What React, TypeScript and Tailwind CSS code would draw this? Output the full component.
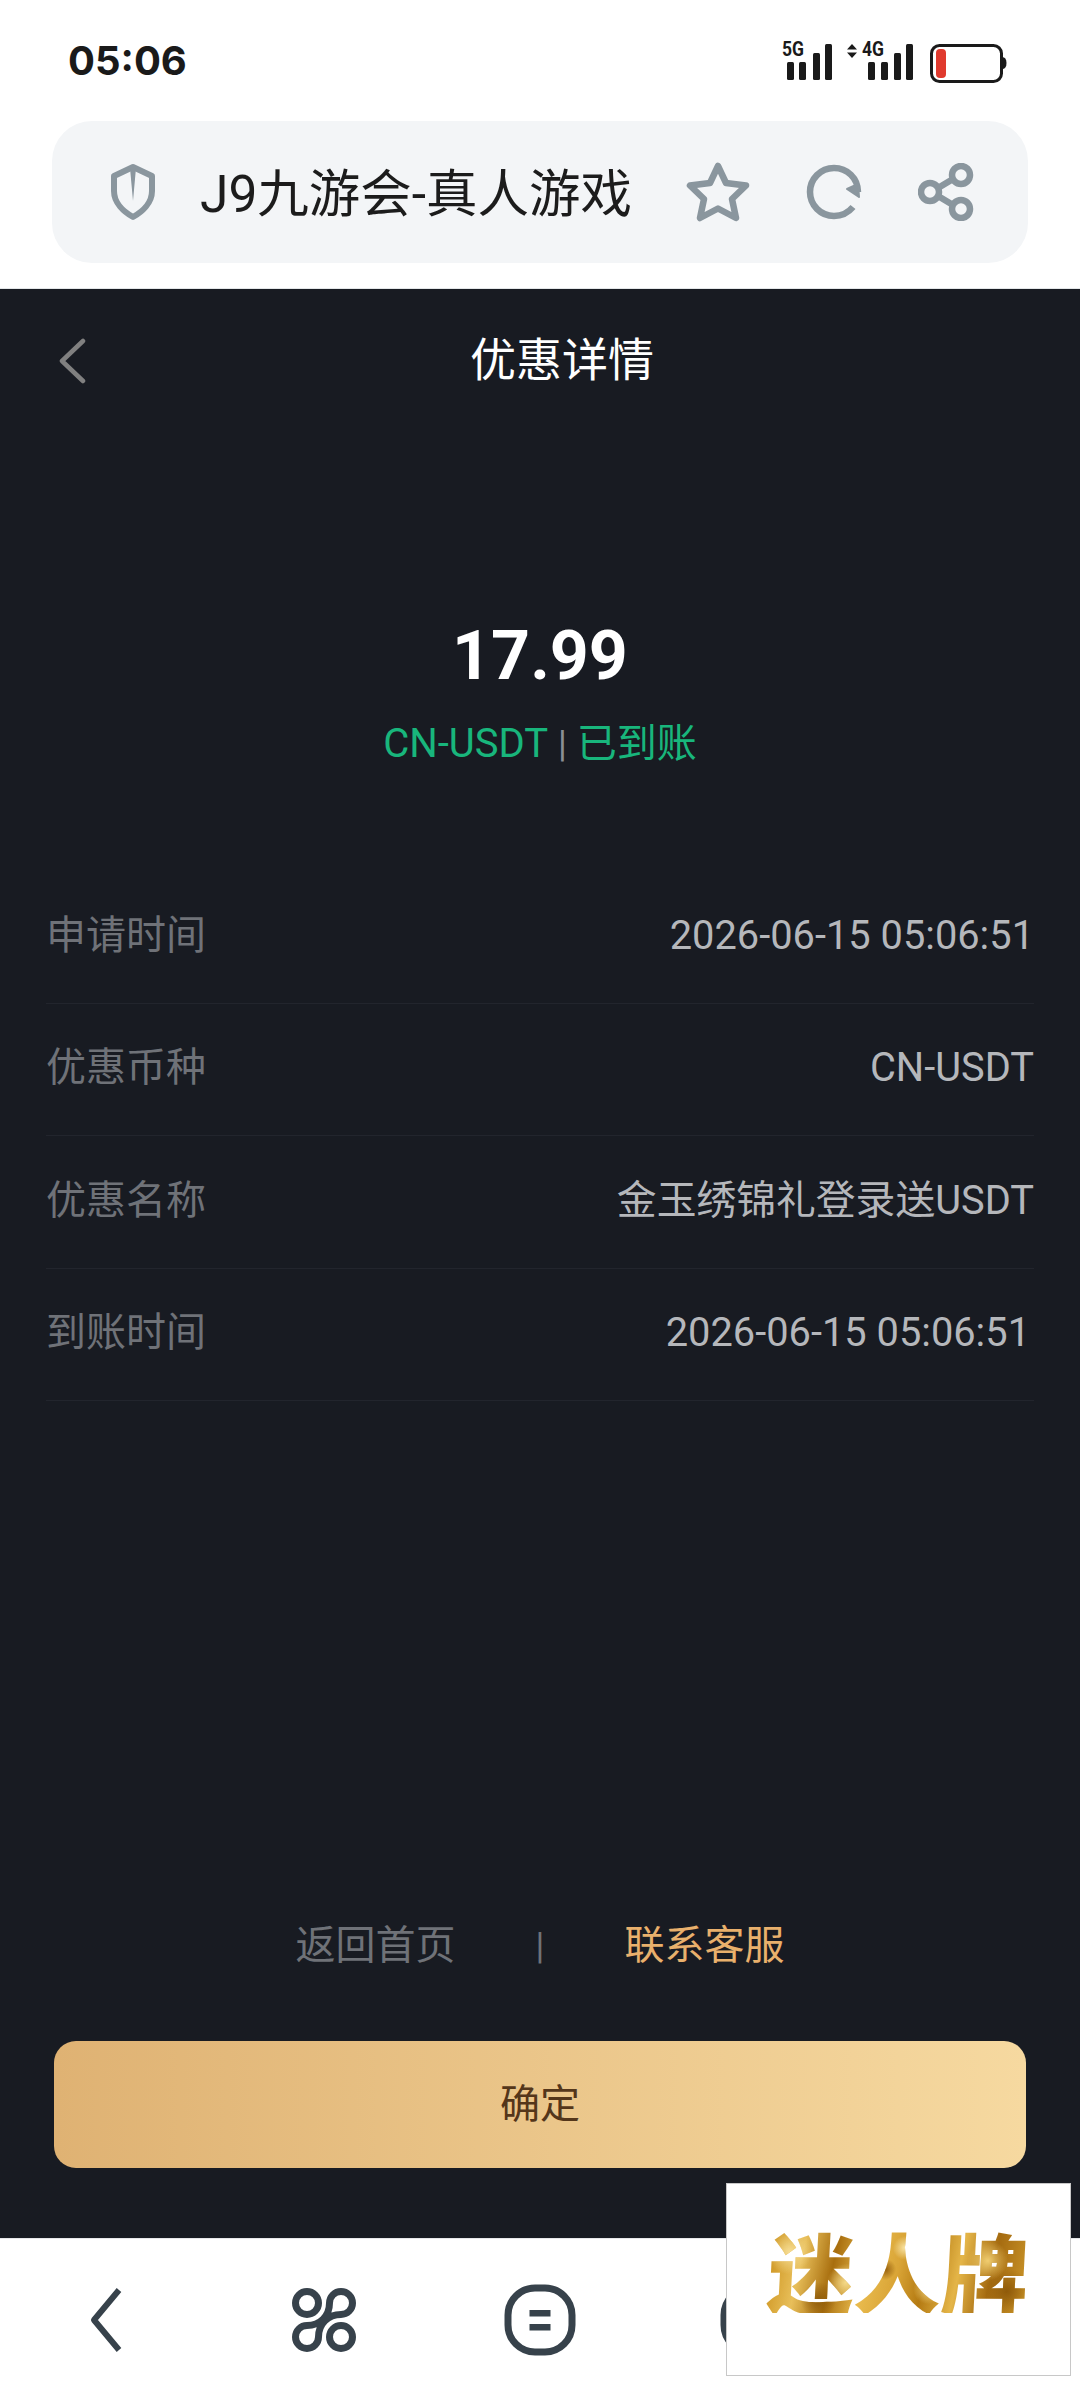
const rows = [
  { label: "申请时间", value: "2026-06-15 05:06:51", shift: "" },
  { label: "优惠币种", value: "CN-USDT", shift: "" },
  { label: "优惠名称", value: "金玉绣锦礼登录送USDT", shift: "" },
  { label: "到账时间", value: "2026-06-15 05:06:51", shift: "mr-[4px]" },
];

function StatusIcons() {
  return (
    <svg width="240" height="56" viewBox="0 -6 240 56">
      <text x="2" y="16" fontFamily="Roboto" fontWeight="700" fontSize="20" fill="#1a1a1a" textLength="22" lengthAdjust="spacingAndGlyphs">5G</text>
      <rect x="7" y="22" width="7" height="18" rx="1.500" fill="#1a1a1a" />
      <rect x="19" y="22" width="7" height="18" rx="1.500" fill="#1a1a1a" />
      <rect x="33" y="13" width="7" height="27" rx="1.500" fill="#1a1a1a" />
      <rect x="45" y="4" width="7" height="36" rx="1.500" fill="#1a1a1a" />
      <path d="M72 4l5 5.500h-10zM72 18l5-5.500h-10z" fill="#1a1a1a" />
      <text x="82" y="16" fontFamily="Roboto" fontWeight="700" fontSize="20" fill="#1a1a1a" textLength="22" lengthAdjust="spacingAndGlyphs">4G</text>
      <rect x="88" y="22" width="7" height="18" rx="1.500" fill="#1a1a1a" />
      <rect x="101" y="22" width="7" height="18" rx="1.500" fill="#1a1a1a" />
      <rect x="114" y="13" width="7" height="27" rx="1.500" fill="#1a1a1a" />
      <rect x="126" y="4" width="7" height="36" rx="1.500" fill="#1a1a1a" />
      <rect x="151.500" y="5.500" width="70" height="36" rx="8" fill="none" stroke="#1a1a1a" strokeWidth="3" />
      <rect x="156" y="9" width="10" height="29" rx="4" fill="#e03a2e" />
      <path d="M222 17c3 0 4.500 2 4.500 6s-1.500 6-4.500 6z" fill="#1a1a1a" />
    </svg>
  );
}

function ShieldIcon() {
  return (
    <svg width="46" height="58" viewBox="0 0 46 58" fill="none">
      <path d="M23 4L42 13V28C42 40 32 49 23 54C14 49 4 40 4 28V13Z" stroke="#8a969e" strokeWidth="6" strokeLinejoin="round" />
      <path d="M20 5H26L23 38Z" fill="#8a969e" />
    </svg>
  );
}

function StarIcon() {
  return (
    <svg width="64" height="60" viewBox="0 0 64 60" fill="none">
      <path d="M32 4L40 21L60 23.500L46 37L50 56L32 46.500L14 56L18 37L4 23.500L24 21Z" stroke="#8a969e" strokeWidth="6.500" strokeLinejoin="round" />
    </svg>
  );
}

function RefreshIcon() {
  return (
    <svg width="56" height="56" viewBox="0 0 56 56" fill="none">
      <path d="M47 43C42 49 36 52 28 52C14.500 52 4 41 4 28C4 15 14.500 4 28 4C41 4 52 14 52 28" stroke="#8a969e" strokeWidth="6.500" />
      <path d="M41 25L52 20L53 33Z" fill="#8a969e" stroke="#8a969e" strokeWidth="2" strokeLinejoin="round" />
    </svg>
  );
}

function ShareIcon() {
  return (
    <svg width="56" height="58" viewBox="0 0 56 58" fill="none" stroke="#8a969e" strokeWidth="6.500">
      <circle cx="12" cy="29" r="9" />
      <circle cx="43" cy="12" r="9" />
      <circle cx="43" cy="46" r="9" />
      <path d="M20 25L35 16M20 33L35 42" />
    </svg>
  );
}

function CommandIcon() {
  return (
    <svg width="64" height="64" viewBox="0 0 64 64" fill="none" stroke="#37424b" strokeWidth="7">
      <circle cx="15" cy="15" r="11.500" />
      <circle cx="49" cy="49" r="11.500" />
      <path d="M37.500 15A11.500 11.500 0 1 1 49 26.500C36 26.500 26.500 36 26.500 49A11.500 11.500 0 1 1 15 37.500C28 37.500 37.500 28 37.500 15Z" strokeLinejoin="round" />
    </svg>
  );
}

function TabIcon() {
  return (
    <svg width="72" height="72" viewBox="0 0 72 72" fill="none">
      <rect x="4" y="4" width="64" height="64" rx="27" stroke="#37424b" strokeWidth="7" />
      <rect x="25.500" y="26" width="21" height="6.500" fill="#37424b" />
      <rect x="25.500" y="40" width="21" height="6.500" fill="#37424b" />
    </svg>
  );
}

export default function App() {
  return (
    <div className="relative flex h-[2400px] w-[1080px] flex-col overflow-hidden bg-white font-['Roboto','Noto_Sans_CJK_SC',sans-serif]">
      {/* status bar */}
      <div className="flex h-[121px] items-start justify-between pl-[68px] pr-[60px] pt-[34px]">
        <span className="mt-[2px] font-['Inter',sans-serif] text-[40px] leading-[50px] font-bold text-[#1a1a1a]">05:06</span>
        <StatusIcons />
      </div>

      {/* address bar */}
      <div className="mx-[52px] flex h-[142px] items-center rounded-[40px] bg-[#f3f5f7] pl-[58px] pr-[54px]">
        <ShieldIcon />
        <span className="ml-[44px] mt-[6px] flex-1 text-[51.500px] leading-none whitespace-nowrap text-[#1c1c1c]">J9九游会-真人游戏</span>
        <div className="flex items-center gap-[56px]">
          <StarIcon />
          <RefreshIcon />
          <ShareIcon />
        </div>
      </div>

      {/* page */}
      <div className="mt-[25px] flex flex-1 flex-col border-t border-[#e3e6e8] bg-[#181b22]">
        <div className="relative flex h-[142px] items-center justify-center">
          <svg width="28" height="46" viewBox="0 0 28 46" fill="none" className="absolute left-[58px] top-[49px]">
            <path d="M25 3L4 23L25 43" stroke="#808080" strokeWidth="4.500" strokeLinecap="round" strokeLinejoin="round" />
          </svg>
          <span className="ml-[44px] text-[46px] leading-none text-white">优惠详情</span>
        </div>

        <div className="mt-[185px] flex flex-col items-center">
          <span className="text-[68px] leading-[80px] font-bold text-white">17.99</span>
          <div className="mt-[23px] flex items-center text-[40px] leading-[50px] text-[#18b67c]">
            <span>CN-USDT</span>
            <span className="mx-[10px] text-[36px] text-[#8b8f96]">|</span>
            <span>已到账</span>
          </div>
        </div>

        <div className="mx-[46px] mt-[102px]">
          {rows.map((row) => (
            <div key={row.label} className="flex h-[132.500px] items-center justify-between border-b border-[#22252d] pb-[2px]">
              <span className="text-[40px] text-[#6f7278]">{row.label}</span>
              <span className={`text-[39.800px] text-[#b5b7bb] ${row.shift}`}>{row.value}</span>
            </div>
          ))}
        </div>

        <div className="mt-auto flex items-center justify-center text-[40px] leading-[50px]">
          <span className="text-[#6f7278]">返回首页</span>
          <span className="mx-[80px] text-[36px] text-[#6f7278]">|</span>
          <span className="text-[#e9b06c]">联系客服</span>
        </div>

        <button className="mx-[54px] mb-[70px] mt-[70px] h-[127px] rounded-[22px] bg-[linear-gradient(90deg,#dfb273,#f6d9a0)] text-[40px] text-[#54361a]">
          确定
        </button>
      </div>

      {/* bottom nav */}
      <div className="grid h-[162px] grid-cols-5 items-center border-t border-[#e6e8ea] bg-white">
        <div className="flex justify-center pr-[4px]">
          <svg width="34" height="66" viewBox="0 0 34 66" fill="none">
            <path d="M30 3L5 33L30 63" stroke="#37424b" strokeWidth="6" strokeLinejoin="round" />
          </svg>
        </div>
        <div className="flex justify-center">
          <CommandIcon />
        </div>
        <div className="flex justify-center">
          <TabIcon />
        </div>
        <div className="flex justify-center">
          <TabIcon />
        </div>
      </div>

      {/* watermark */}
      <div className="absolute left-[726px] top-[2183px] flex h-[193px] w-[345px] items-center justify-center border border-[#c8c8c8] bg-white pb-[20px]">
        <span className="-skew-x-3 bg-[radial-gradient(circle_at_8%_30%,#f6dd94_0,transparent_9%),radial-gradient(circle_at_30%_65%,#f4d988_0,transparent_10%),radial-gradient(circle_at_52%_25%,#f8e3a4_0,transparent_8%),radial-gradient(circle_at_62%_72%,#f2d27c_0,transparent_9%),radial-gradient(circle_at_84%_40%,#f0cd70_0,transparent_9%),radial-gradient(circle_at_20%_85%,#8f5c0c_0,transparent_8%),radial-gradient(circle_at_45%_50%,#96600e_0,transparent_7%),radial-gradient(circle_at_92%_75%,#8f5a0a_0,transparent_9%),linear-gradient(100deg,#c98d16_0%,#e8bf5a_14%,#a86e0e_26%,#e9bb4e_38%,#d9a436_50%,#b47a12_60%,#e4b548_72%,#a56b10_84%,#cf9a2c_100%)] bg-clip-text font-['Noto_Sans_CJK_SC',sans-serif] text-[87px] leading-none font-black text-transparent">
          迷人牌
        </span>
      </div>
    </div>
  );
}
